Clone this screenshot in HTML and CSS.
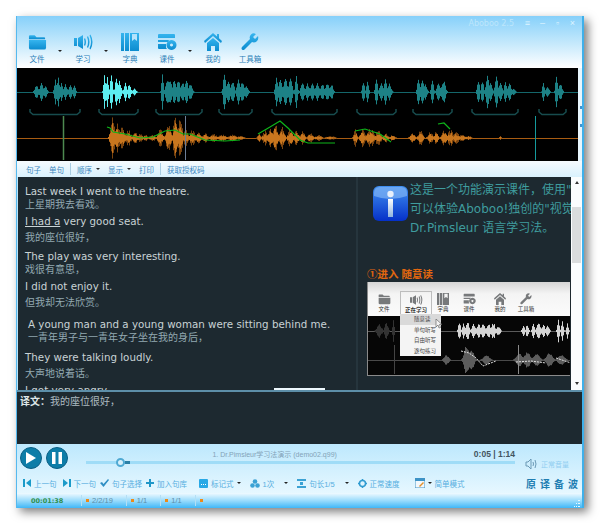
FILE: index.html
```html
<!DOCTYPE html>
<html lang="zh">
<head>
    <meta charset="UTF-8">
    <title>Aboboo 2.5</title>
    <link rel="stylesheet" href="styles.css">
</head>
<body>
    <!-- shared icons -->
    <svg class="defs" width="0" height="0">
        <defs>
            <linearGradient id="toolblue" x1="0" y1="0" x2="0" y2="1">
                <stop offset="0" stop-color="#35b4ee"/>
                <stop offset="1" stop-color="#0c8ccf"/>
            </linearGradient>
            <linearGradient id="infoblue" x1="0" y1="0" x2="0" y2="1">
                <stop offset="0" stop-color="#3f8ff0"/>
                <stop offset="1" stop-color="#0530c8"/>
            </linearGradient>
            <linearGradient id="infobar" x1="0" y1="0" x2="0" y2="1">
                <stop offset="0" stop-color="#ffffff"/>
                <stop offset="1" stop-color="#8fb2dd"/>
            </linearGradient>
            <symbol id="i-folder" viewBox="0 0 20 18">
                <path d="M1 3q0-1 1-1h5l2 2h8q1 0 1 1v1H1z"/>
                <path d="M1 7h18v8q0 2-2 2H3q-2 0-2-2z"/>
            </symbol>
            <symbol id="i-speaker" viewBox="0 0 20 18">
                <path d="M1 5h3v8H1zM5 5l5-3v14l-5-3z"/>
                <path d="M12 5q2 4 0 8l-1-1q1-3 0-6zM15 3q3 6 0 12l-1-1q2-5 0-10zM17.500 1.500q4 7.500 0 15l-1-1q3-6.500 0-13z"/>
            </symbol>
            <symbol id="i-book" viewBox="0 0 18 18">
                <path d="M0 0h3v18H0zM4 0h4v18H4z"/>
                <path d="M9 0h9v18H9zM11 1v7l2.500-2 2.500 2V1z" fill-rule="evenodd"/>
            </symbol>
            <symbol id="i-course" viewBox="0 0 20 18">
                <path d="M2 1h15q1 0 1 1v3H1V2q0-1 1-1zM1 7h11l-1 2H1zM1 11h8v3q0 1 1 2H2q-1 0-1-1z"/>
                <path d="M14.500 7a5 5 0 1 0 .01 0zM14.500 10.500a1.500 1.500 0 1 1-.01 0z" fill-rule="evenodd"/>
            </symbol>
            <symbol id="i-home" viewBox="0 0 18 18">
                <path d="M9 0L0 8l1 2 8-7 8 7 1-2-3-2.700V1h-2v2.500z"/>
                <path d="M9 5l6 5v8h-4v-5H7v5H3v-8z"/>
            </symbol>
            <symbol id="i-wrench" viewBox="0 0 18 18">
                <path d="M17 3l-3 3-2-2 3-3q-3-1.500-5 .5-2 2-1 4.500L1 14q-1 1.500 0 2.500t2.500 0L11 9q2.500 1 4.500-.5 2.500-2 1.500-5.500z"/>
            </symbol>
        </defs>
    </svg>

    <div class="window">
        <div class="top">
            <div class="titlebar">
                <span class="app-name">Aboboo 2.5</span>
                <span class="win-btn">≡</span>
                <span class="win-btn">–</span>
                <span class="win-btn">▫</span>
                <span class="win-btn">×</span>
            </div>
            <div class="tools">
                <div class="tool"><svg width="19" height="18" fill="url(#toolblue)"><use href="#i-folder"/></svg><span>文件</span></div>
                <i class="caret tool-caret"></i>
                <div class="tool"><svg width="20" height="18" fill="url(#toolblue)"><use href="#i-speaker"/></svg><span>学习</span></div>
                <i class="caret tool-caret wide"></i>
                <div class="tool"><svg width="18" height="18" fill="url(#toolblue)"><use href="#i-book"/></svg><span>字典</span></div>
                <div class="tool tight"><svg width="20" height="18" fill="url(#toolblue)"><use href="#i-course"/></svg><span>课件</span></div>
                <i class="caret tool-caret"></i>
                <div class="tool"><svg width="18" height="18" fill="url(#toolblue)"><use href="#i-home"/></svg><span>我的</span></div>
                <div class="tool tight"><svg width="18" height="18" fill="url(#toolblue)"><use href="#i-wrench"/></svg><span>工具箱</span></div>
            </div>
        </div>

        <div class="wave-row">
            <canvas id="waves" width="561" height="93"></canvas>
            <div class="wave-side"><b></b><b></b></div>
        </div>

        <div class="tabs">
            <span>句子</span>
            <span>单句</span>
            <i class="sep"></i>
            <span>顺序</span><i class="caret"></i>
            <span>显示</span><i class="caret"></i>
            <span>打印</span>
            <i class="sep"></i>
            <span>获取授权码</span>
        </div>

        <div class="main">
            <div class="sentences">
                <div class="sent">
                    <p class="en">Last week I went to the theatre.</p>
                    <p class="cn">上星期我去看戏。</p>
                </div>
                <div class="sent">
                    <p class="en"><u>I had a</u> very good seat.</p>
                    <p class="cn far">我的座位很好，</p>
                </div>
                <div class="sent gap4">
                    <p class="en">The play was very interesting.</p>
                    <p class="cn">戏很有意思，</p>
                </div>
                <div class="sent">
                    <p class="en">I did not enjoy it.</p>
                    <p class="cn far">但我却无法欣赏。</p>
                </div>
                <div class="sent gap7 indent">
                    <p class="en">A young man and a young woman were sitting behind me.</p>
                    <p class="cn">一青年男子与一青年女子坐在我的身后，</p>
                </div>
                <div class="sent gap5">
                    <p class="en">They were talking loudly.</p>
                    <p class="cn far">大声地说着话。</p>
                </div>
                <div class="sent">
                    <p class="en">I got very angry.</p>
                </div>
                <div class="sent-tab"></div>
            </div>

            <div class="notes">
                <div class="intro">
                    <svg class="info" width="35" height="35" viewBox="0 0 35 35">
                        <rect width="35" height="35" rx="6" fill="url(#infoblue)"/>
                        <path d="M1 7q0-6 6-6h21q6 0 6 6v3Q17 16 1 10z" fill="#7fb4f5" opacity=".7"/>
                        <circle cx="17.500" cy="8" r="3.200" fill="#e8f0fb"/>
                        <rect x="15" y="13" width="5" height="18" fill="url(#infobar)"/>
                    </svg>
                    <p class="intro-text">这是一个功能演示课件，使用"A<br>可以体验Aboboo!独创的"视觉<br>Dr.Pimsleur 语言学习法。</p>
                </div>
                <h3 class="step">①进入 随意读</h3>
                <div class="shot">
                    <div class="shot-tools">
                        <div class="mini-tool"><svg width="13" height="12" fill="#77797b"><use href="#i-folder"/></svg><span>文件</span></div>
                        <div class="mini-tool on"><svg width="14" height="12" fill="#77797b"><use href="#i-speaker"/></svg><span>正在学习</span></div>
                        <div class="mini-tool"><svg width="12" height="12" fill="#77797b"><use href="#i-book"/></svg><span>字典</span></div>
                        <div class="mini-tool"><svg width="13" height="12" fill="#77797b"><use href="#i-course"/></svg><span>课件</span></div>
                        <div class="mini-tool"><svg width="12" height="12" fill="#77797b"><use href="#i-home"/></svg><span>我的</span></div>
                        <div class="mini-tool"><svg width="12" height="12" fill="#77797b"><use href="#i-wrench"/></svg><span>工具箱</span></div>
                    </div>
                    <canvas id="shot-waves" width="203" height="59"></canvas>
                    <div class="shot-menu">
                        <span class="on">随意读</span>
                        <span>单句听写</span>
                        <span>自由听写</span>
                        <span>逐句练习</span>
                    </div>
                    <svg class="shot-cursor" width="7" height="10" viewBox="0 0 7 10"><path d="M1 0v8l2-2 1 3 1.500-.5-1-3H7z" fill="#f2f2f2" stroke="#555" stroke-width=".6"/></svg>
                </div>
            </div>

            <div class="scroll">
                <i class="arrow up"></i>
                <div class="thumb"></div>
                <i class="arrow down"></i>
            </div>
        </div>

        <div class="trans"><b>译文：</b>我的座位很好，</div>

        <div class="player">
            <div class="play-row">
                <div class="round"><svg width="10" height="12" viewBox="0 0 10 12"><path d="M0 0l10 6-10 6z" fill="#fff"/></svg></div>
                <div class="round"><svg width="10" height="12" viewBox="0 0 10 12"><path d="M0 0h3.500v12H0zM6.500 0H10v12H6.500z" fill="#fff"/></svg></div>
                <div class="track-col">
                    <div class="track-info">
                        <span class="track-title">1. Dr.Pimsleur学习法演示 (demo02.q99)</span>
                        <span class="track-time">0:05 | 1:14</span>
                    </div>
                    <div class="slider">
                        <i class="knob"></i>
                        <i class="knob-tail"></i>
                    </div>
                </div>
                <div class="volume">
                    <svg width="12" height="12" viewBox="0 0 12 12" fill="none" stroke="#6b99b5"><path d="M1 4h2l3-3v10L3 8H1zM8 4q1 2 0 4M10 2q2 4 0 8"/></svg>
                    <span>正常音量</span>
                </div>
            </div>

            <div class="ctl-row">
                <div class="ctl"><svg width="8" height="8" viewBox="0 0 8 8" fill="#1b9bc9"><path d="M0 0h2v8H0zM8 0v8L3 4z"/></svg><span>上一句</span></div>
                <div class="ctl m6"><svg width="8" height="8" viewBox="0 0 8 8" fill="#1b9bc9"><path d="M0 0l5 4-5 4zM6 0h2v8H6z"/></svg><span>下一句</span></div>
                <div class="ctl m4"><svg width="9" height="8" viewBox="0 0 9 8" fill="#2f8fc4"><path d="M0 4l2-1 1.500 2L8 0l1 1-5.500 7z"/></svg><span>句子选择</span></div>
                <div class="ctl m4"><svg width="8" height="8" viewBox="0 0 8 8" fill="#1f97c8"><path d="M3 0h2v3h3v2H5v3H3V5H0V3h3z"/></svg><span>加入句库</span></div>
                <div class="ctl m12"><svg width="9" height="9" viewBox="0 0 9 9"><rect width="9" height="9" rx="1" fill="#29a9e6"/><path d="M2 5h1v1H2zM4 5h1v1H4zM6 5h1v1H6z" fill="#fff"/></svg><span>标记式</span><i class="caret"></i></div>
                <div class="ctl m9"><svg width="10" height="9" viewBox="0 0 10 9" fill="#3ba2d4"><circle cx="5" cy="2.500" r="2.300"/><circle cx="2.500" cy="6.500" r="2.300"/><circle cx="7.500" cy="6.500" r="2.300"/></svg><span>1次</span><i class="caret far-caret"></i></div>
                <div class="ctl m9"><svg width="9" height="9" viewBox="0 0 9 9" fill="#3ba2d4"><path d="M0 0h9v2H0zM3 3h3v3H3zM0 7h9v2H0z"/></svg><span>句长1/5</span><i class="caret far-caret"></i></div>
                <div class="ctl m9"><svg width="9" height="9" viewBox="0 0 9 9" fill="none" stroke="#2f9bd0" stroke-width="1.500"><circle cx="4.500" cy="4.500" r="3"/><path d="M4.500 0v1.500M4.500 7.500V9M0 4.500h1.500M7.500 4.500H9"/></svg><span>正常速度</span></div>
                <div class="ctl m15"><svg width="10" height="10" viewBox="0 0 10 10"><rect width="10" height="10" rx="1" fill="#f2f8fc" stroke="#3e93c6"/><rect width="10" height="3" fill="#3e93c6"/><path d="M4 8l4-4 1 1-4 4z" fill="#e0902d"/></svg><i class="caret"></i><span>简单模式</span></div>
                <div class="modes"><b>原</b><b>译</b><b>备</b><b>波</b></div>
            </div>

            <div class="status">
                <span class="clock">00:01:38</span>
                <div class="stat"><i></i>2/2/19</div>
                <div class="stat"><i></i>1/1</div>
                <div class="stat"><i></i>1/1</div>
                <div class="stat"><i></i></div>
                <svg class="grip" width="7" height="7" viewBox="0 0 7 7" fill="#e8f8ff"><path d="M5 0h2v1H5zM3 3h1v1H3zM5 3h2v1H5zM1 6h1v1H1zM3 6h1v1H3zM5 6h2v1H5z"/></svg>
            </div>
        </div>
    </div>
    <script src="wave.js"></script>
</body>
</html>
```

FILE: styles.css
```css
html, body {
    margin: 0;
    padding: 0;
    background-color: #fff;
}

body {
    padding: 16px 0 0 16px;
    font-family: "Liberation Sans", "Noto Sans CJK SC", sans-serif;
    overflow: hidden;
    height: 523px;
    box-sizing: border-box;
}

p, h3 {
    margin: 0;
}

canvas {
    display: block;
    flex: none;
    filter: blur(0.35px);
}

.defs {
    position: absolute;
}

.window {
    width: 568px;
    height: 492px;
    box-sizing: border-box;
    border-left: 1px solid #56b9ee;
    border-right: 2px solid #3fb0ea;
    box-shadow: 4px 4px 9px rgba(0, 0, 0, 0.5);
    display: flex;
    flex-direction: column;
}

/* top: title and big buttons */
.top {
    height: 52px;
    background: linear-gradient(#86d0fa, #c8eafc 55%, #ffffff);
}

.titlebar {
    height: 14px;
    display: flex;
    justify-content: flex-end;
    align-items: center;
    padding-right: 2px;
    color: #bde6fb;
    font-size: 8px;
}

.app-name {
    margin-right: 6px;
    font-family: "DejaVu Sans", sans-serif;
}

.win-btn {
    width: 15px;
    text-align: center;
    font-size: 9px;
    color: #dff4ff;
}

.tools {
    display: flex;
    padding-left: 2px;
    height: 38px;
}

.tool {
    width: 36px;
    display: flex;
    flex-direction: column;
    align-items: center;
    padding-top: 3px;
    box-sizing: border-box;
}

.tool span {
    margin-top: 4px;
    font-size: 7.5px;
    line-height: 10px;
    color: #2b7fb8;
}

.tool.tight {
    margin-left: 1px;
}

.caret {
    display: inline-block;
    width: 0;
    height: 0;
    border-left: 2px solid transparent;
    border-right: 2px solid transparent;
    border-top: 2px solid #222;
}

.tool-caret {
    margin: 20px 3px 0;
}

.tool-caret.wide {
    margin: 20px 4px 0 3px;
}

/* waveforms */
.wave-row {
    display: flex;
    height: 93px;
    background-color: #000;
}

.wave-side {
    flex: 1;
    background-color: #e9f6fd;
    padding-top: 38px;
    display: flex;
    flex-direction: column;
    align-items: flex-end;
    gap: 15px;
}

.wave-side b {
    width: 2px;
    height: 3px;
    background-color: #3f93d0;
}

.tabs {
    height: 16px;
    display: flex;
    align-items: center;
    padding-left: 9px;
    gap: 8px;
    font-size: 7.5px;
    color: #3b86bd;
    background: linear-gradient(#f6fbfe, #d9f1fd);
    flex: none;
}

.tabs .caret {
    margin-left: -4px;
    border-top-color: #2a2a2a;
}

.sep {
    width: 1px;
    height: 12px;
    background-color: #a9cde2;
    margin: 0 -2px;
}

/* middle part */
.main {
    height: 213px;
    flex: none;
    display: flex;
    background-color: #1d2930;
    border-left: 1px solid #b9e3f7;
}

.sentences {
    width: 340px;
    flex: none;
    box-sizing: border-box;
    padding: 7px 0 0 7px;
    overflow: hidden;
    position: relative;
    border-right: 2px solid #26353d;
}

.sent {
    margin-top: 2px;
}

.sent:first-child {
    margin-top: 0;
}

.sent.gap4 {
    margin-top: 4px;
}

.sent.gap5 {
    margin-top: 5px;
}

.sent.gap7 {
    margin-top: 7px;
}

.sent.indent {
    padding-left: 3px;
}

.en {
    font-family: "DejaVu Sans", sans-serif;
    font-size: 10.300px;
    line-height: 14px;
    color: #c9d3d6;
    white-space: nowrap;
}

.cn {
    font-size: 10px;
    line-height: 14px;
    color: #93a9b2;
    white-space: nowrap;
}

.cn.far {
    margin-top: 3px;
}

.sent-tab {
    position: absolute;
    left: 256px;
    bottom: 0;
    width: 51px;
    height: 2px;
    background-color: #eef8fd;
}

.notes {
    flex: 1;
    min-width: 0;
    overflow: hidden;
    padding-left: 9px;
}

.intro {
    display: flex;
    padding: 4px 0 0 6px;
    height: 79px;
    box-sizing: border-box;
}

.info {
    flex: none;
    margin-top: 5px;
}

.intro-text {
    margin-left: 2px;
    font-family: "DejaVu Sans", "Noto Sans CJK SC", sans-serif;
    font-size: 12px;
    line-height: 19px;
    color: #3f9c9e;
    white-space: nowrap;
}

.step {
    font-size: 10.500px;
    line-height: 14px;
    font-weight: bold;
    color: #e2670f;
    margin-top: 11px;
}

.shot {
    position: relative;
    margin-top: 1px;
    width: 203px;
    height: 94px;
    overflow: hidden;
    box-sizing: border-box;
    border-left: 1px solid #8a8a8a;
    border-bottom: 1px solid #8a8a8a;
}

.shot-tools {
    height: 34px;
    display: grid;
    grid-template-columns: 32px 32px 22px 30px 32px 20px;
    background: linear-gradient(#d5d5d5, #f4f4f4 35%, #fbfbfb);
}

.mini-tool {
    display: flex;
    flex-direction: column;
    align-items: center;
    padding-top: 11px;
    box-sizing: border-box;
}

.mini-tool span {
    font-size: 5.500px;
    line-height: 9px;
    color: #333;
    white-space: nowrap;
}

.mini-tool.on {
    border: 1px solid #bdbdbd;
    border-bottom: 0;
    margin-top: 9px;
    padding-top: 2px;
}

.mini-tool.on span {
    font-weight: bold;
}

.shot-menu {
    position: absolute;
    left: 32px;
    top: 32px;
    width: 41px;
    height: 42px;
    background-color: #f4f4f4;
    display: flex;
    flex-direction: column;
    font-size: 5.500px;
    color: #444;
}

.shot-menu span {
    flex: 1;
    line-height: 10px;
    padding: 0 0 0 14px;
}

.shot-menu .on {
    background-color: #d9d9d9;
}

.shot-cursor {
    position: absolute;
    left: 67px;
    top: 37px;
}

.scroll {
    width: 11px;
    flex: none;
    background-color: #fbfdfe;
    display: flex;
    flex-direction: column;
    align-items: center;
}

.thumb {
    width: 9px;
    height: 56px;
    margin-top: 23px;
    background-color: #dadcdd;
}

.arrow {
    width: 0;
    height: 0;
    border-left: 2px solid transparent;
    border-right: 2px solid transparent;
}

.arrow.up {
    border-bottom: 3px solid #333;
    margin-top: 4px;
}

.arrow.down {
    border-top: 3px solid #333;
    margin-top: auto;
    margin-bottom: 5px;
}

/* translation */
.trans {
    height: 54px;
    flex: none;
    box-sizing: border-box;
    background-color: #1d2930;
    border-top: 2px solid #5d8fa9;
    padding: 3px 0 0 3px;
    font-size: 10px;
    line-height: 14px;
    color: #aebcc2;
}

.trans b {
    color: #dfe6e8;
}

/* player */
.player {
    flex: 1;
    display: flex;
    flex-direction: column;
    background: linear-gradient(#bde8fd, #e8f8ff 80%);
}

.play-row {
    height: 29px;
    display: flex;
    padding: 3px 0 0 3px;
    box-sizing: border-box;
    gap: 4px;
}

.round {
    width: 22px;
    height: 22px;
    box-sizing: border-box;
    border-radius: 50%;
    background-color: #0d7da8;
    border: 1px solid #0a5f85;
    display: flex;
    align-items: center;
    justify-content: center;
}

.track-col {
    width: 429px;
    margin-left: 14px;
}

.track-info {
    display: flex;
    height: 11px;
    justify-content: flex-end;
    align-items: center;
    padding-top: 1px;
}

.track-title {
    font-size: 7px;
    color: #83a3b8;
    margin-right: 137px;
    white-space: nowrap;
}

.track-time {
    font-size: 8.500px;
    font-weight: bold;
    color: #43555f;
    white-space: nowrap;
}

.slider {
    position: relative;
    height: 3px;
    margin-top: 2px;
    background-color: #9fdcf7;
}

.knob {
    position: absolute;
    left: 30px;
    top: -3px;
    width: 9px;
    height: 9px;
    box-sizing: border-box;
    border: 2px solid #4fa9d3;
    border-radius: 50%;
    background-color: #d6f0fb;
}

.knob-tail {
    position: absolute;
    left: 39px;
    top: 0;
    width: 5px;
    height: 3px;
    background-color: #2a7fa6;
}

.volume {
    display: flex;
    align-items: center;
    gap: 4px;
    margin: 11px 0 0 6px;
    height: 12px;
    font-size: 7px;
    color: #8fcdf0;
    white-space: nowrap;
}

.ctl-row {
    height: 20px;
    display: flex;
    align-items: center;
    padding: 0 4px 0 6px;
    font-size: 7.500px;
    color: #56aee0;
    box-sizing: border-box;
}

.ctl {
    display: flex;
    align-items: center;
    gap: 3px;
    white-space: nowrap;
}

.m4 { margin-left: 4px; }
.m6 { margin-left: 6px; }
.m9 { margin-left: 9px; }
.m12 { margin-left: 12px; }
.m15 { margin-left: 15px; }

.far-caret {
    margin-left: 7px;
}

.modes {
    margin-left: auto;
    display: flex;
    gap: 4px;
    font-size: 10px;
    color: #1f7eb2;
}

.status {
    height: 15px;
    flex: none;
    display: flex;
    align-items: center;
    padding-left: 14px;
    background: linear-gradient(#f0faff, #9bdcfc 50%, #3fb7f7);
    font-size: 7.500px;
    color: #5f8ea8;
    position: relative;
}

.clock {
    width: 50px;
    font-family: "DejaVu Sans", sans-serif;
    font-size: 6.500px;
    color: #2e8f4d;
    font-weight: bold;
}

.stat {
    display: flex;
    align-items: center;
    gap: 3px;
    margin-right: 13px;
    padding-left: 4px;
    border-left: 1px solid #b3dff5;
    height: 11px;
}

.stat i {
    width: 3px;
    height: 3px;
    background-color: #ef8a17;
}

.grip {
    position: absolute;
    right: 2px;
    bottom: 1px;
}
```

FILE: wave.js
```js
// Draws the waveforms. Peaks are [x, height, width] in page pixels.
var seed = 7;
function noise() {
    seed = (seed * 16807) % 2147483647;
    return seed / 2147483647;
}

function envelope(peaks, x) {
    var best = 0;
    for (var i = 0; i < peaks.length; i++) {
        var d = (x - peaks[i][0]) / (peaks[i][2] || 2.2);
        var v = peaks[i][1] * Math.exp(-d * d);
        if (v > best) best = v;
    }
    return best;
}

function drawWave(ctx, peaks, base, color, from, to, low, high) {
    ctx.fillStyle = color;
    for (var x = from; x < to; x += 1) {
        var a = envelope(peaks, x) * (low + (high - low) * noise());
        if (a < 0.3) continue;
        ctx.fillRect(x, base - a, 1, a * 2);
    }
}

function drawLine(ctx, points, color, width, dash) {
    ctx.strokeStyle = color;
    ctx.lineWidth = width;
    ctx.setLineDash(dash || []);
    ctx.beginPath();
    points.forEach(function (p, i) {
        if (i === 0) ctx.moveTo(p[0], p[1]);
        else ctx.lineTo(p[0], p[1]);
    });
    ctx.stroke();
    ctx.setLineDash([]);
}

var teal = [
    [36, 6], [41, 8], [45, 5], [55, 11, 1.5], [58, 13, 1.5], [61, 9, 1.5], [65, 7], [70, 6], [74, 7, 1.5],
    [162, 16, 1.2], [167, 12], [170, 11], [174, 11], [178, 11], [182, 9], [186, 10], [190, 8],
    [224, 17, 1.6], [228, 12], [232, 11], [238, 12], [242, 9], [246, 6],
    [276, 13, 1.5], [280, 12], [285, 13], [290, 12], [296, 14, 1.5], [302, 8], [307, 8], [312, 8], [317, 8], [322, 8], [327, 8], [331, 7],
    [363, 10, 1.5], [367, 10, 1.5], [376, 12, 1.5], [381, 8], [385, 12, 1.5], [389, 8],
    [418, 13, 1.5], [422, 10], [425, 7], [432, 12, 1.5], [438, 9], [443, 11, 2.5],
    [478, 11, 1.5], [482, 11, 1.5], [487, 15, 1.8], [490, 10], [496, 14, 1.8], [500, 9], [505, 10, 1.5], [509, 8], [513, 3],
    [543, 10, 1.2], [547, 5], [556, 18, 1.2], [560, 7]
];
var bright = [
    [104, 20, 1.1], [107, 18, 1.1], [111, 16, 1.5], [116, 13, 1.5], [119, 10], [125, 8, 1.8], [129, 8, 1.8], [134, 3]
];
var orange = [
    [112, 20, 2.5], [117, 14, 3], [122, 12, 3], [128, 8, 3], [135, 6, 3], [140, 4, 3], [145, 3, 3], [152, 3, 4],
    [160, 8, 3], [168, 13, 3], [175, 22, 2.5], [180, 18, 2.5], [185, 8, 3], [192, 8, 3], [198, 6, 3], [205, 5, 3],
    [213, 4, 4], [222, 3, 5], [232, 3, 5], [240, 2, 4],
    [259, 5, 2], [265, 7, 3], [270, 10, 3], [275, 14, 3], [282, 10, 3], [290, 8, 3], [296, 7, 3], [302, 6, 3], [310, 5, 3], [318, 3, 4], [330, 2, 5],
    [355, 8, 2], [362, 8, 3], [370, 9, 4], [378, 8, 3], [385, 5, 3], [392, 3, 3],
    [412, 5, 3], [420, 7, 3], [430, 6, 3], [436, 7, 2], [444, 8, 3], [450, 8, 3], [456, 6, 3], [462, 4, 3], [468, 2.5, 3], [500, 2.5, 1]
];

var cv = document.getElementById('waves');
var ctx = cv.getContext('2d');
ctx.translate(-17, -68); // coordinates below are page pixels

ctx.fillStyle = '#000';
ctx.fillRect(17, 68, 561, 93);

drawLine(ctx, [[17, 92.5], [578, 92.5]], '#14666a', 1);
drawWave(ctx, teal, 92, '#1d8286', 17, 578, 0.8, 1.15);
drawWave(ctx, bright, 92, '#5ceef0', 17, 578, 0.8, 1.15);

// sentence brackets
[[30, 80], [99, 138], [156, 202], [219, 252], [272, 337], [357, 396], [413, 452], [472, 518], [539, 566]].forEach(function (b) {
    drawLine(ctx, [[b[0], 109], [b[0], 112], [b[0] + 3, 114.5], [b[1] - 3, 114.5], [b[1], 112], [b[1], 109]], '#174c4e', 1.5);
});

// answer track: dim tall spikes, bright core
drawLine(ctx, [[17, 138.5], [578, 138.5]], '#a85c12', 1);
drawWave(ctx, orange, 138, '#7a440f', 100, 510, 0.55, 1.15);
drawWave(ctx, orange, 138, '#c8761e', 100, 510, 0.35, 0.75);

drawLine(ctx, [[63.5, 116], [63.5, 160]], '#4d8a50', 1.5);
drawLine(ctx, [[185.5, 116], [185.5, 160]], '#6d7f98', 1);
drawLine(ctx, [[535.5, 116], [535.5, 160]], '#159a9c', 1);

// pitch curves
drawLine(ctx, [[107, 127], [110, 128], [113, 132], [125, 134], [140, 138], [153, 137], [165, 131], [175, 130], [183, 134], [190, 134], [205, 140], [225, 141], [240, 140]], '#0eb51a', 1.2);
drawLine(ctx, [[258, 134], [270, 127], [280, 121], [288, 128], [300, 140], [308, 143], [335, 143]], '#0eb51a', 1.2);
drawLine(ctx, [[355, 131], [365, 129], [380, 134], [391, 142]], '#0eb51a', 1.2);
drawLine(ctx, [[438, 124], [444, 123], [450, 129]], '#0eb51a', 1.2);

// the small picture in the notes
var sv = document.getElementById('shot-waves');
var sc = sv.getContext('2d');
sc.translate(-367, -316);
sc.fillStyle = '#060606';
sc.fillRect(367, 316, 203, 59);
drawLine(sc, [[367, 331.5], [570, 331.5]], '#5a5a5a', 1);
drawLine(sc, [[367, 360.5], [570, 360.5]], '#4a4a4a', 1);
drawWave(sc, [[378, 7, 3], [385, 10, 2], [392, 12, 1]], 331, '#333', 367, 400, 0.6, 1);
drawWave(sc, [[458, 10, 1.5], [462, 8, 1.5], [466, 9], [472, 7], [477, 7], [482, 8], [487, 8], [492, 8], [497, 5],
    [522, 6, 1.5], [526, 7, 1.5], [532, 8, 1.5], [537, 8], [542, 6], [546, 5],
    [557, 13, 1.3], [561, 9, 1.3], [566, 8, 1.3]], 331, '#d4d4d4', 440, 570, 0.7, 1.1);
drawWave(sc, [[445, 5, 3], [465, 16, 3], [470, 12, 3], [485, 5, 4], [518, 7, 4], [526, 8, 4], [535, 7, 4], [548, 7, 4], [560, 6, 4]], 360, '#5c5c5c', 432, 570, 0.7, 1);
drawLine(sc, [[393.5, 345], [393.5, 374]], '#444', 1);
drawLine(sc, [[517.5, 345], [517.5, 374]], '#8a8a8a', 1);
drawLine(sc, [[460, 351], [468, 353], [475, 358], [482, 366], [495, 361]], '#dedede', 1, [2, 1]);
drawLine(sc, [[515, 362], [530, 361], [545, 363]], '#dedede', 1, [2, 1]);
drawLine(sc, [[555, 358], [570, 363]], '#dedede', 1, [2, 1]);
```
